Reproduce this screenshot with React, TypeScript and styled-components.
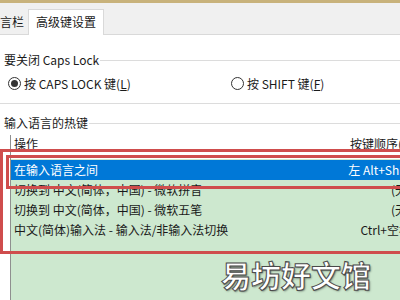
import styled, { createGlobalStyle } from "styled-components";

const GlobalStyle = createGlobalStyle`
  html, body {
    margin: 0;
    padding: 0;
    overflow: hidden;
    background: #ffffff;
  }
  body {
    font-family: "Noto Sans CJK SC", "Noto Sans", sans-serif;
    font-size: 12px;
    color: #1a1a1a;
  }
`;

const Frame = styled.div`
  position: relative;
  width: 400px;
  height: 300px;
  overflow: hidden;
  background: #ffffff;
`;

const TopBar = styled.div`
  height: 3px;
  background: #c8b27b;
`;

const TabStrip = styled.div`
  height: 32px;
  background: #f0f0f0;
  border-bottom: 1px solid #d9d9d9;
  display: flex;
  align-items: flex-end;
  box-sizing: border-box;
`;

const Tab = styled.div<{ $active?: boolean }>`
  height: ${(p) => (p.$active ? "26px" : "24px")};
  line-height: 24px;
  box-sizing: border-box;
  padding: ${(p) => (p.$active ? "0 7px" : "0 4px 0 0")};
  margin-left: ${(p) => (p.$active ? "0" : "-12px")};
  margin-bottom: ${(p) => (p.$active ? "-1px" : "0")};
  background: ${(p) => (p.$active ? "#ffffff" : "transparent")};
  border: ${(p) => (p.$active ? "1px solid #d9d9d9" : "none")};
  border-bottom: none;
  white-space: nowrap;
`;

const Content = styled.div`
  padding: 17px 0 0 4px;
`;

const GroupTitle = styled.div`
  display: flex;
  align-items: center;
  height: 16px;
  line-height: 16px;
  white-space: nowrap;
  &::after {
    content: "";
    flex: 1;
    height: 1px;
    background: #dcdcdc;
    margin-left: 1px;
  }
`;

const RadioRow = styled.div`
  display: flex;
  align-items: center;
  height: 16px;
  margin-top: 7px;
  padding-left: 4px;
`;

const Option = styled.label<{ $width?: number }>`
  display: flex;
  align-items: center;
  gap: 3px;
  width: ${(p) => (p.$width ? `${p.$width}px` : "auto")};
  white-space: nowrap;
  u {
    text-decoration: underline;
  }
`;

const Radio = styled.span<{ $checked?: boolean }>`
  width: 13px;
  height: 13px;
  border: 1px solid #333;
  border-radius: 50%;
  box-sizing: border-box;
  display: flex;
  align-items: center;
  justify-content: center;
  &::after {
    content: "";
    display: ${(p) => (p.$checked ? "block" : "none")};
    width: 7px;
    height: 7px;
    border-radius: 50%;
    background: #333;
  }
`;

const Divider = styled.div`
  height: 1px;
  background: #dcdcdc;
  margin-top: 12px;
  margin-left: -4px;
`;

const SecondTitle = styled(GroupTitle)`
  margin-top: 11px;
`;

const ListView = styled.div`
  margin-left: 6px;
  margin-top: 4px;
  width: 410px;
  border-left: 1px solid #8f8f8f;
`;

const Row = styled.div<{ $selected?: boolean; $header?: boolean }>`
  display: grid;
  grid-template-columns: 1fr 80px;
  height: ${(p) => (p.$header ? "24px" : "20px")};
  line-height: ${(p) => (p.$header ? "18px" : "20px")};
  padding: 0 10px 0 3px;
  background: ${(p) =>
    p.$header ? "#ffffff" : p.$selected ? "#0078d7" : "#cde8cf"};
  color: ${(p) => (p.$selected ? "#ffffff" : "#1a1a1a")};
  white-space: nowrap;
  span:last-child {
    text-align: ${(p) => (p.$header ? "left" : "right")};
    padding-left: ${(p) => (p.$header ? "19px" : "0")};
  }
`;

const Spacer = styled.div`
  height: 1px;
  background: #cde8cf;
`;

const Fill = styled.div`
  height: 80px;
  background: #cde8cf;
`;

const Mark = styled.div<{ $left: number; $top: number; $height: number }>`
  position: absolute;
  left: ${(p) => p.$left}px;
  top: ${(p) => p.$top}px;
  width: 440px;
  height: ${(p) => p.$height}px;
  border: 3px solid #cf4d4d;
  box-sizing: border-box;
  pointer-events: none;
`;

const Watermark = styled.div`
  position: absolute;
  left: 221px;
  top: 252px;
  font-size: 30px;
  font-weight: 700;
  color: #ffffff;
  -webkit-text-stroke: 1px #4a4a4a;
  text-shadow: 1px 1px 2px rgba(0, 0, 0, 0.5);
  white-space: nowrap;
`;

const rows = [
  { action: "在输入语言之间", keys: "左 Alt+Shift", selected: true },
  { action: "切换到 中文(简体，中国) - 微软拼音", keys: "(无)" },
  { action: "切换到 中文(简体，中国) - 微软五笔", keys: "(无)" },
  { action: "中文(简体)输入法 - 输入法/非输入法切换", keys: "Ctrl+空格" },
];

export default function App() {
  return (
    <Frame>
      <GlobalStyle />
      <TopBar />
      <TabStrip>
        <Tab>语言栏</Tab>
        <Tab $active>高级键设置</Tab>
      </TabStrip>
      <Content>
        <GroupTitle>要关闭 Caps Lock</GroupTitle>
        <RadioRow>
          <Option $width={223}>
            <Radio $checked />
            <span>
              按 CAPS LOCK 键(<u>L</u>)
            </span>
          </Option>
          <Option>
            <Radio />
            <span>
              按 SHIFT 键(<u>F</u>)
            </span>
          </Option>
        </RadioRow>
        <Divider />
        <SecondTitle>输入语言的热键</SecondTitle>
        <ListView>
          <Row $header>
            <span>操作</span>
            <span>按键顺序(K)</span>
          </Row>
          <Spacer />
          {rows.map((r) => (
            <Row key={r.action} $selected={r.selected}>
              <span>{r.action}</span>
              <span>{r.keys}</span>
            </Row>
          ))}
          <Fill />
        </ListView>
      </Content>
      <Mark $left={0} $top={149} $height={105} />
      <Mark $left={6} $top={155} $height={34} />
      <Watermark>易坊好文馆</Watermark>
    </Frame>
  );
}
